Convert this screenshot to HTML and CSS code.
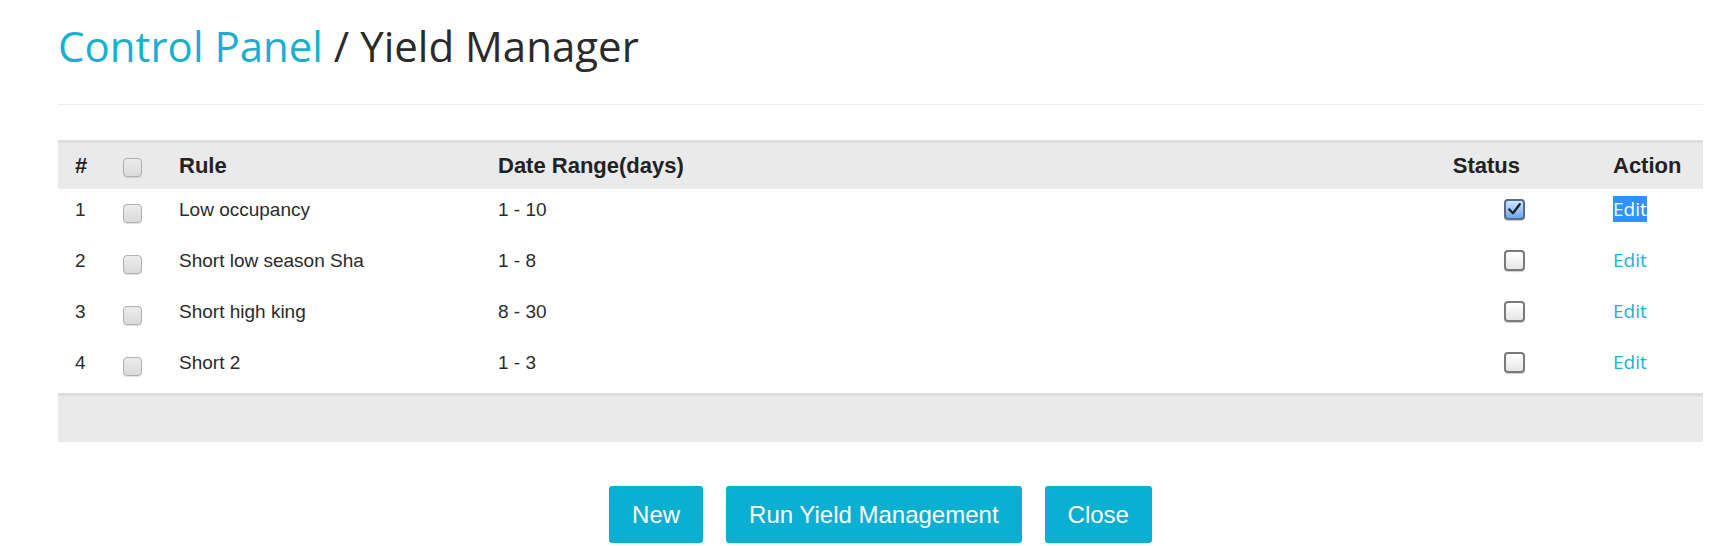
FILE: index.html
```html
<!DOCTYPE html>
<html lang="en">
<head>
<meta charset="utf-8">
<title>Yield Manager</title>
<link rel="stylesheet" href="styles.css">
</head>
<body>
<div class="page">
  <h1 class="title"><a class="crumb" href="#">Control Panel</a> / Yield Manager</h1>
  <hr class="rule">
  <table class="grid">
    <colgroup>
      <col class="c-num"><col class="c-chk"><col class="c-rule"><col class="c-date"><col class="c-status"><col class="c-action">
    </colgroup>
    <thead>
      <tr>
        <th>#</th>
        <th><span class="box"></span></th>
        <th>Rule</th>
        <th>Date Range(days)</th>
        <th class="status">Status</th>
        <th>Action</th>
      </tr>
    </thead>
    <tbody>
      <tr>
        <td>1</td>
        <td><span class="box"></span></td>
        <td>Low occupancy</td>
        <td>1 - 10</td>
        <td class="status"><span class="sbox on"><svg viewBox="0 0 20 20" width="15" height="15"><path d="M3 10 L8 15 L17 3" fill="none" stroke="#1d2430" stroke-width="3.2" stroke-linecap="round" stroke-linejoin="round"/></svg></span></td>
        <td><a class="edit sel" href="#">Edit</a></td>
      </tr>
      <tr>
        <td>2</td>
        <td><span class="box"></span></td>
        <td>Short low season Sha</td>
        <td>1 - 8</td>
        <td class="status"><span class="sbox"></span></td>
        <td><a class="edit" href="#">Edit</a></td>
      </tr>
      <tr>
        <td>3</td>
        <td><span class="box"></span></td>
        <td>Short high king</td>
        <td>8 - 30</td>
        <td class="status"><span class="sbox"></span></td>
        <td><a class="edit" href="#">Edit</a></td>
      </tr>
      <tr>
        <td>4</td>
        <td><span class="box"></span></td>
        <td>Short 2</td>
        <td>1 - 3</td>
        <td class="status"><span class="sbox"></span></td>
        <td><a class="edit" href="#">Edit</a></td>
      </tr>
    </tbody>
    <tfoot>
      <tr><td colspan="6"></td></tr>
    </tfoot>
  </table>
  <div class="actions">
    <button class="btn" type="button">New</button>
    <button class="btn" type="button">Run Yield Management</button>
    <button class="btn" type="button">Close</button>
  </div>
</div>
</body>
</html>
```
FILE: styles.css
```css
html, body {
  margin: 0;
  padding: 0;
  background: #ffffff;
}

body {
  font-family: "Liberation Sans", Arial, sans-serif;
  color: #333333;
}

.page {
  padding: 0 31px 0 58px;
}

.title {
  margin: 0;
  padding-top: 21px;
  font-family: "Open Sans", "Liberation Sans", sans-serif;
  font-weight: 400;
  font-size: 42px;
  line-height: 50px;
  color: #2a2a2a;
}

.crumb {
  color: #19b0cf;
  text-decoration: none;
}

.rule {
  margin: 33px 0 0 0;
  border: 0;
  border-top: 1px solid #ececec;
  height: 0;
}

.grid {
  margin-top: 35px;
  width: 100%;
  table-layout: fixed;
  border-collapse: collapse;
  border-top: 3px solid #dddddd;
}

.c-num { width: 48px; }
.c-chk { width: 56px; }
.c-rule { width: 319px; }
.c-status { width: 200px; }
.c-action { width: 107px; }

.grid th {
  background: #eaeaea;
  height: 46px;
  box-sizing: border-box;
  padding: 10px 0 10px 17px;
  text-align: left;
  font-size: 22px;
  line-height: 26px;
  font-weight: 700;
  color: #222222;
  vertical-align: top;
}

.grid th .box {
  margin-top: 5px;
}

.grid td {
  height: 51px;
  box-sizing: border-box;
  padding: 7px 0 17px 17px;
  font-size: 19px;
  line-height: 27px;
  color: #2b2b2b;
  vertical-align: top;
  white-space: nowrap;
}

.grid th.status,
.grid td.status {
  text-align: right;
  padding-right: 76px;
}

.grid td.status {
  padding-right: 71px;
}

.grid tfoot td {
  height: 47px;
  padding: 0;
  background: #eaeaea;
  border-top: 3px solid #dddddd;
}

.box {
  display: inline-block;
  vertical-align: top;
  width: 19px;
  height: 19px;
  box-sizing: border-box;
  margin-top: 8px;
  border: 1px solid #b0b0b0;
  border-radius: 4px;
  background: linear-gradient(to bottom, #ececec, #dadada);
  box-shadow: 0 1px 1px rgba(0, 0, 0, 0.12);
}

.sbox {
  display: inline-flex;
  align-items: center;
  justify-content: center;
  vertical-align: top;
  width: 21px;
  height: 21px;
  box-sizing: border-box;
  margin-top: 3px;
  border: 2px solid #7a7a7a;
  border-radius: 4px;
  background: linear-gradient(to bottom, #ffffff, #e6e6e6);
  box-shadow: 0 1px 1px rgba(0, 0, 0, 0.2);
}

.sbox.on {
  border-color: #5b6a88;
  background: linear-gradient(to bottom, #cfe6fb, #6aa7ea);
}

.edit {
  font-family: "Open Sans", "Liberation Sans", sans-serif;
  font-size: 19px;
  color: #1ab2d2;
  text-decoration: none;
}

.edit.sel {
  background: #3390ff;
  color: #ffffff;
}

.actions {
  display: flex;
  justify-content: center;
  gap: 23px;
  margin-top: 44px;
}

.btn {
  font-family: "Liberation Sans", Arial, sans-serif;
  font-size: 24px;
  line-height: 33px;
  padding: 12px 23px;
  color: #ffffff;
  background: #0bafd2;
  border: 0;
  border-radius: 3px;
}
```
